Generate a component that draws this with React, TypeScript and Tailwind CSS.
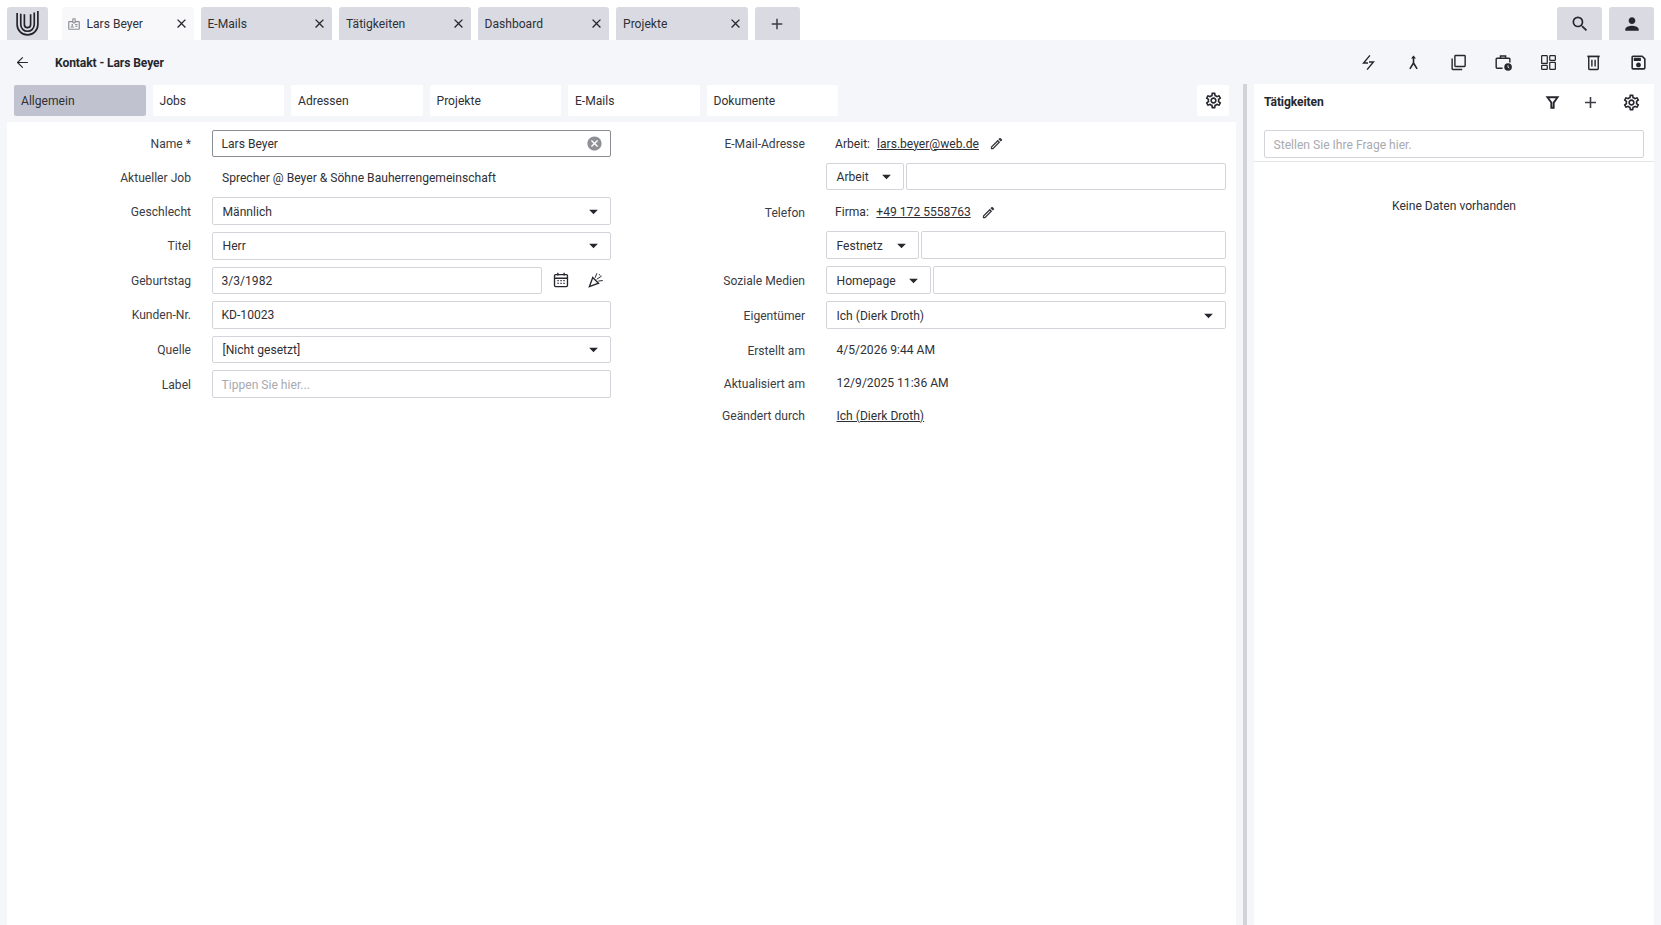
import { ReactNode } from "react";
import { ArrowLeft } from "lucide-react";
import {
  MdAdd,
  MdArrowDropDown,
  MdCancel,
  MdClose,
  MdOutlineBadge,
  MdOutlineEdit,
  MdOutlineSave,
  MdOutlineSettings,
  MdPerson,
  MdSearch,
} from "react-icons/md";

const topTabs = ["Lars Beyer", "E-Mails", "Tätigkeiten", "Dashboard", "Projekte"];
const subTabs = ["Allgemein", "Jobs", "Adressen", "Projekte", "E-Mails", "Dokumente"];

function Logo() {
  return (
    <svg viewBox="0 0 24 26" className="h-[27px] w-[25px]" fill="none" stroke="#22232a" strokeWidth="1.6">
      <path d="M2 3v11a10 10 0 0 0 20 0V1" />
      <path d="M5.5 3.5V14a6.5 6.5 0 0 0 13 0V2.5" />
      <path d="M9 4v10a3 3 0 0 0 6 0V4" />
    </svg>
  );
}

function Icon({ size = "h-[19px] w-[19px]", children }: { size?: string; children: ReactNode }) {
  return (
    <svg viewBox="0 0 20 20" className={size} fill="none" stroke="#26272e" strokeWidth="1.5">
      {children}
    </svg>
  );
}

function BriefcaseClock() {
  return (
    <Icon>
      <path d="M9 16H3.2a.9.9 0 0 1-.9-.9V6.4a.9.9 0 0 1 .9-.9h12.6a.9.9 0 0 1 .9.9V10" />
      <path d="M6.8 5.5V3.2h5.4v2.3" />
      <circle cx="14.8" cy="14.8" r="4" fill="#26272e" stroke="none" />
      <path d="M14.8 12.9v2.1l1.3.9" stroke="#fff" strokeWidth="0.9" />
    </Icon>
  );
}

function Field({ value, placeholder, className = "" }: { value?: string; placeholder?: string; className?: string }) {
  return (
    <div className={`flex h-[27.6px] items-center rounded-[2px] border border-[#d4d5da] bg-white pl-[8.5px] ${className}`}>
      {value && <span className="pt-[1px]">{value}</span>}
      {placeholder && <span className="pt-[2px] text-[#a9aab0]">{placeholder}</span>}
    </div>
  );
}

function Select({ value, className = "" }: { value: string; className?: string }) {
  return (
    <div className={`flex h-[27.6px] items-center justify-between rounded-[2px] border border-[#d4d5da] bg-white pl-[9.5px] pr-[6px] ${className}`}>
      <span className="pt-[1px]">{value}</span>
      <MdArrowDropDown className="text-[21px] text-[#26272e]" />
    </div>
  );
}

function Row({ label, width, children, className = "" }: { label?: string; width: string; children: ReactNode; className?: string }) {
  return (
    <div className={`flex min-h-[27.6px] items-center gap-[21px] ${className}`}>
      <div className={`shrink-0 pt-[1px] text-right text-[#3b3c44] ${width}`}>{label}</div>
      <div className="min-w-0 flex-1">{children}</div>
    </div>
  );
}

function Edit() {
  return <MdOutlineEdit className="text-[15px] text-[#33343a]" />;
}

export default function App() {
  return (
    <div
      className="flex h-screen flex-col overflow-hidden bg-[#f5f6f9] text-[12.1px] text-[#2f3036] antialiased"
      style={{ fontFamily: "Roboto, sans-serif" }}
    >
      {/* Kopfzeile mit Tabs */}
      <header className="flex h-10 shrink-0 items-end gap-[7px] bg-white px-[7px]">
        <div className="mr-[7px] flex h-[33px] w-[41px] items-center justify-center rounded-t-[3px] bg-[#d9dae2]">
          <Logo />
        </div>
        {topTabs.map((tab, i) => (
          <div
            key={tab}
            className={`flex h-[33px] w-[131.5px] items-center rounded-t-[3px] pr-[5px] ${
              i === 0 ? "bg-[#f8f8fa] pl-[5px]" : "bg-[#d9dae2] pl-[7px]"
            }`}
          >
            {i === 0 && <MdOutlineBadge className="mr-[5.5px] text-[14px] text-[#8d8e96]" />}
            <span className="flex-1 truncate pt-[2px]">{tab}</span>
            <MdClose className="text-[15px] text-[#26272e]" />
          </div>
        ))}
        <div className="flex h-[33px] w-[45px] items-center justify-center rounded-t-[3px] bg-[#d9dae2]">
          <MdAdd className="text-[18px] text-[#3b3c44]" />
        </div>
        <div className="ml-auto flex h-[33px] w-[45px] items-center justify-center rounded-t-[3px] bg-[#d9dae2]">
          <MdSearch className="text-[20px] text-[#26272e]" />
        </div>
        <div className="flex h-[33px] w-[45px] items-center justify-center rounded-t-[3px] bg-[#d9dae2]">
          <MdPerson className="text-[20px] text-[#26272e]" />
        </div>
      </header>

      {/* Titelzeile */}
      <div className="flex h-[44px] shrink-0 items-center pl-[14px] pr-[13px]">
        <ArrowLeft className="h-[17px] w-[17px] text-[#26272e]" strokeWidth={1.5} />
        <h1 className="ml-[24px] pt-[3px] font-bold tracking-[-0.1px] text-[#26272e]">Kontakt - Lars Beyer</h1>
        <div className="ml-auto flex items-center gap-[26px] text-[19px] text-[#26272e]">
          <Icon>
            <path d="M11.5 2.5 4.8 10.5H9.5" />
            <path d="M10.5 9.5h4.7L8.5 17.5" />
          </Icon>
          <Icon>
            <path d="M10 4v6.5M10 10.5l-3.8 6.2M10 10.5l3.8 6.2" strokeWidth="1.7" />
            <path d="M7.4 5.8 10 2.6l2.6 3.2z" fill="#26272e" stroke="none" />
          </Icon>
          <Icon>
            <path d="M7 2.7h9.2a.8.8 0 0 1 .8.8v10a.8.8 0 0 1-.8.8H7a.8.8 0 0 1-.8-.8v-10a.8.8 0 0 1 .8-.8z" />
            <path d="M3.3 5.8v10.7a.8.8 0 0 0 .8.8h9.8" />
          </Icon>
          <BriefcaseClock />
          <Icon>
            <rect x="2.8" y="2.8" width="5.9" height="8.2" rx="0.6" strokeWidth="1.3" />
            <rect x="11.3" y="2.8" width="5.9" height="5" rx="0.6" strokeWidth="1.3" />
            <rect x="2.8" y="13" width="5.9" height="4.2" rx="0.6" strokeWidth="1.3" />
            <rect x="11.3" y="9.8" width="5.9" height="7.4" rx="0.6" strokeWidth="1.3" />
          </Icon>
          <Icon>
            <path d="M3.5 3.6h13" strokeWidth="1.8" />
            <path d="M5 4v12.4a.9.9 0 0 0 .9.9h8.2a.9.9 0 0 0 .9-.9V4" />
            <path d="M8.3 7.2v7M11.7 7.2v7" />
          </Icon>
          <MdOutlineSave />
        </div>
      </div>

      <div className="flex min-h-0 flex-1">
        {/* Hauptbereich */}
        <div className="flex w-[1236px] shrink-0 flex-col pl-[7px]">
          <div className="flex h-[38px] shrink-0 items-start gap-[7px] pl-[7px] pt-[1px]">
            {subTabs.map((tab, i) => (
              <div
                key={tab}
                className={`flex h-[31px] w-[131.5px] items-center rounded-[2px] pl-[7px] pt-[2px] ${i === 0 ? "bg-[#c0c2d0]" : "bg-white"}`}
              >
                {tab}
              </div>
            ))}
            <div className="ml-auto mr-[7px] flex h-[31px] w-[32px] items-center justify-center rounded-[2px] bg-white">
              <MdOutlineSettings className="text-[19px] text-[#26272e]" />
            </div>
          </div>

          <div className="flex flex-1 bg-white pt-[7.5px]">
            <div className="flex w-[604px] shrink-0 flex-col gap-[7px]">
              <Row label="Name *" width="w-[184px]">
                <div className="flex h-[27.6px] items-center justify-between rounded-[2px] border border-[#8c8d93] pl-[8.5px] pr-[7px]">
                  <span className="pt-[1px]">Lars Beyer</span>
                  <MdCancel className="text-[17px] text-[#8f9096]" />
                </div>
              </Row>
              <Row label="Aktueller Job" width="w-[184px]" className="!min-h-[26.4px]">
                <span className="block pl-[10px] pt-[1px]">Sprecher @ Beyer &amp; Söhne Bauherrengemeinschaft</span>
              </Row>
              <Row label="Geschlecht" width="w-[184px]"><Select value="Männlich" /></Row>
              <Row label="Titel" width="w-[184px]"><Select value="Herr" /></Row>
              <Row label="Geburtstag" width="w-[184px]">
                <div className="flex items-center">
                  <Field value="3/3/1982" className="w-[330px]" />
                  <span className="ml-[10px]">
                    <Icon size="h-[18px] w-[18px]">
                      <rect x="2.8" y="4" width="14.4" height="13.4" rx="1.2" />
                      <path d="M2.8 8h14.4M6.5 2v3M13.5 2v3" />
                      <path d="M6 10.7h1.5M9.3 10.7h1.5M12.6 10.7h1.5M6 13.8h1.5M9.3 13.8h1.5M12.6 13.8h1.5" strokeWidth="1.4" />
                    </Icon>
                  </span>
                  <span className="ml-[17px]">
                    <Icon size="h-[18px] w-[18px]">
                      <path d="M2.6 17.4 6.4 7.2l6.4 6.4z" />
                      <path d="M9 7.5 11 2.5M10.8 9.2l5.4-3.6M12.6 11.2l5-.6M13.5 3.5l1 1.5" strokeWidth="1.1" />
                    </Icon>
                  </span>
                </div>
              </Row>
              <Row label="Kunden-Nr." width="w-[184px]"><Field value="KD-10023" /></Row>
              <Row label="Quelle" width="w-[184px]"><Select value="[Nicht gesetzt]" /></Row>
              <Row label="Label" width="w-[184px]"><Field placeholder="Tippen Sie hier..." /></Row>
            </div>

            <div className="flex w-[615px] shrink-0 flex-col gap-[5px]">
              <Row label="E-Mail-Adresse" width="w-[194px]">
                <div className="flex items-center pl-[9px]">
                  <span className="mr-[7px] pt-[1px]">Arbeit:</span>
                  <span className="pt-[1px] underline">lars.beyer@web.de</span>
                  <span className="ml-[10px]"><Edit /></span>
                </div>
              </Row>
              <Row width="w-[194px]" className="mt-[0.5px]">
                <div className="flex gap-[2px]">
                  <Select value="Arbeit" className="w-[78px] shrink-0" />
                  <Field className="flex-1" />
                </div>
              </Row>
              <Row label="Telefon" width="w-[194px]" className="mt-[3.5px]">
                <div className="flex items-center pl-[9px]">
                  <span className="mr-[7.5px]">Firma:</span>
                  <span className="underline">+49 172 5558763</span>
                  <span className="ml-[10px]"><Edit /></span>
                </div>
              </Row>
              <Row width="w-[194px]">
                <div className="flex gap-[2px]">
                  <Select value="Festnetz" className="w-[93px] shrink-0" />
                  <Field className="flex-1" />
                </div>
              </Row>
              <Row label="Soziale Medien" width="w-[194px]" className="mt-[2.5px]">
                <div className="flex gap-[2px]">
                  <Select value="Homepage" className="w-[105px] shrink-0" />
                  <Field className="flex-1" />
                </div>
              </Row>
              <Row label="Eigentümer" width="w-[194px]" className="mt-[2.5px]"><Select value="Ich (Dierk Droth)" /></Row>
              <Row label="Erstellt am" width="w-[194px]" className="mt-[2.7px]"><span className="pl-[10.5px]">4/5/2026 9:44 AM</span></Row>
              <Row label="Aktualisiert am" width="w-[194px]"><span className="pl-[10.5px]">12/9/2025 11:36 AM</span></Row>
              <Row label="Geändert durch" width="w-[194px]"><span className="pl-[10.5px] underline">Ich (Dierk Droth)</span></Row>
            </div>
          </div>
        </div>

        {/* Trenner */}
        <div className="ml-[7px] w-[4px] shrink-0 bg-[#d2d3d9]" />

        {/* Seitenleiste */}
        <aside className="ml-[7px] mr-[7px] flex flex-1 flex-col bg-white">
          <div className="flex h-[36px] shrink-0 items-center pl-[10px] pr-[13px] pt-[1px]">
            <h2 className="font-bold tracking-[-0.1px] text-[#26272e]">Tätigkeiten</h2>
            <div className="ml-auto flex items-center text-[19px] text-[#26272e]">
              <Icon size="h-[17px] w-[17px]">
                <path d="M4 3.8h12l-4.6 6.4v6H8.6v-6.2z" strokeWidth="2.2" />
              </Icon>
              <MdAdd className="ml-[20px] text-[#3b3c44]" />
              <MdOutlineSettings className="ml-[22px]" />
            </div>
          </div>
          <div className="mt-[10px] border-b border-[#e4e5e9] px-[10px] pb-[3px]">
            <Field placeholder="Stellen Sie Ihre Frage hier." />
          </div>
          <div className="pt-[35px] text-center">Keine Daten vorhanden</div>
        </aside>
      </div>
    </div>
  );
}
